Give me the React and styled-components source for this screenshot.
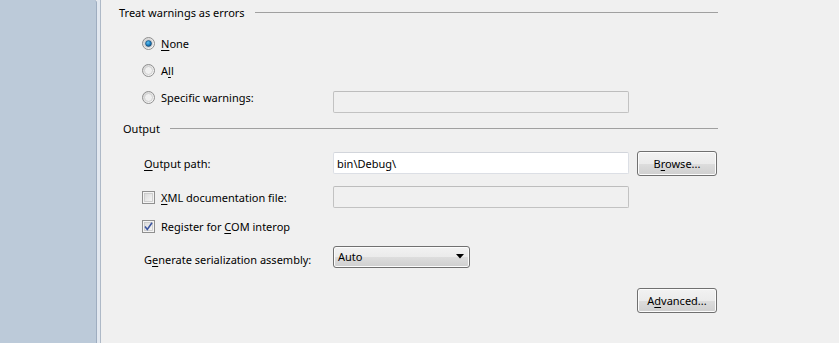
import React from "react";
import styled, { createGlobalStyle } from "styled-components";

const Global = createGlobalStyle`
  html, body { margin: 0; padding: 0; }
  body {
    background: #f0f0f0;
    font-family: "Noto Sans", "Open Sans", sans-serif;
    font-size: 11px;
    color: #000;
  }
`;

const Page = styled.div`
  display: flex;
  width: 839px;
  height: 343px;
  overflow: hidden;
  background: #f0f0f0;
`;

const Sidebar = styled.div`
  width: 96px;
  flex: none;
  background: #bccad9;
  border-top-right-radius: 3px;
  border-right: 1px solid #9eadc0;
`;

const Divider = styled.div`
  width: 3px;
  flex: none;
  background: #e2e8f0;
  border-right: 1px solid #aeb9c7;
`;

const Content = styled.div`
  flex: 1;
  padding-left: 18px;
  display: flex;
  flex-direction: column;
  width: 599px;
  max-width: 599px;
`;

const Header = styled.div`
  display: flex;
  align-items: center;
  height: 24px;
  gap: 10px;
  margin-top: ${(p) => p.$top || 0}px;
  padding-left: ${(p) => p.$indent || 0}px;
  &::after {
    content: "";
    flex: 1;
    border-top: 1px solid #a0a0a0;
  }
`;

const Row = styled.div`
  display: grid;
  grid-template-columns: 183px 296px 80px;
  column-gap: 8px;
  align-items: ${(p) => p.$align || "center"};
  padding-left: 23px;
  height: ${(p) => p.$h || 22}px;
  margin-top: ${(p) => p.$top || 0}px;
`;

const Choice = styled.label`
  display: flex;
  align-items: center;
  gap: 6px;
  white-space: nowrap;
  height: ${(p) => (p.$h ? p.$h + "px" : "auto")};
`;

const Label = styled.span`
  white-space: nowrap;
  padding-left: 2px;
  padding-top: ${(p) => p.$pt || 0}px;
`;

const Key = styled.span`
  text-decoration: underline;
  text-underline-offset: 2px;
`;

const TextBox = styled.div`
  height: 22px;
  box-sizing: border-box;
  border: 1px solid ${(p) => (p.$disabled ? "#c2c2c2" : "#dcdfe5")};
  border-top-color: ${(p) => (p.$disabled ? "#bdbdbd" : "#d2d5db")};
  border-radius: 2px;
  background: ${(p) => (p.$disabled ? "#f0f0f0" : "#ffffff")};
  display: flex;
  align-items: center;
  padding-left: 3px;
  margin-top: ${(p) => p.$mt || 0}px;
`;

const Button = styled.button`
  font: inherit;
  color: #000;
  height: 25px;
  width: 80px;
  box-sizing: border-box;
  border: 1px solid #707070;
  border-radius: 3px;
  background: linear-gradient(#f2f2f2 0%, #ebebeb 50%, #dddddd 51%, #cfcfcf 100%);
  box-shadow: inset 0 0 0 1px #fcfcfc;
  padding: 0;
  grid-column: 3;
`;

const Select = styled.div`
  width: 137px;
  height: 22px;
  box-sizing: border-box;
  border: 1px solid #707070;
  border-radius: 3px;
  background: linear-gradient(#f2f2f2 0%, #ebebeb 50%, #dddddd 51%, #cfcfcf 100%);
  box-shadow: inset 0 0 0 1px #fcfcfc;
  display: flex;
  align-items: center;
  justify-content: space-between;
  padding: 0 5px 1px 4px;
`;

const Actions = styled.div`
  display: flex;
  justify-content: flex-end;
  margin-top: 20px;
  padding-right: 1px;
`;

const Radio = ({ checked }) => (
  <svg width="13" height="13" viewBox="0 0 13 13">
    <defs>
      <linearGradient id="rg" x1="0" y1="0" x2="1" y2="1">
        <stop offset="0" stopColor="#d0d0d0" />
        <stop offset="1" stopColor="#ffffff" />
      </linearGradient>
      <radialGradient id="rb" cx="0.4" cy="0.35" r="0.7">
        <stop offset="0" stopColor="#5fc0f0" />
        <stop offset="0.6" stopColor="#1a7fc0" />
        <stop offset="1" stopColor="#0b4d80" />
      </radialGradient>
    </defs>
    <circle cx="6.5" cy="6.5" r="6" fill="url(#rg)" stroke="#8f8f8f" />
    <circle cx="6.5" cy="6.5" r="4" fill="#f0f0f0" stroke="#c9c9c9" strokeWidth="0.8" />
    {checked && <circle cx="6.5" cy="6.5" r="3" fill="url(#rb)" stroke="#1a3f66" strokeWidth="0.6" />}
  </svg>
);

const Check = ({ checked }) => (
  <svg width="13" height="13" viewBox="0 0 13 13">
    <defs>
      <linearGradient id="cg" x1="0" y1="0" x2="1" y2="1">
        <stop offset="0" stopColor="#dadada" />
        <stop offset="1" stopColor="#f7f7f7" />
      </linearGradient>
    </defs>
    <rect x="0.5" y="0.5" width="12" height="12" fill="#f4f4f4" stroke="#8f8f8f" />
    <rect x="2.5" y="2.5" width="8" height="8" fill="url(#cg)" stroke="#c6c6c6" strokeWidth="0.8" />
    {checked && (
      <path d="M3 6.5 L5.3 9.5 L10 2.8" fill="none" stroke="#3d56a0" strokeWidth="1.6" />
    )}
  </svg>
);

const Arrow = () => (
  <svg width="8" height="5" viewBox="0 0 8 5">
    <path d="M0 0 H8 L4 4.5 Z" fill="#000" />
  </svg>
);

export default function App() {
  return (
    <Page>
      <Global />
      <Sidebar />
      <Divider />
      <Content>
        <Header>Treat warnings as errors</Header>

        <Row $h={27} $top={6}>
          <Choice>
            <Radio checked />
            <span>
              <Key>N</Key>one
            </span>
          </Choice>
        </Row>
        <Row $h={27}>
          <Choice>
            <Radio />
            <span>
              A<Key>l</Key>l
            </span>
          </Choice>
        </Row>
        <Row $h={27} $align="start">
          <Choice $h={27}>
            <Radio />
            <span>
              Specif<Key>i</Key>c warnings:
            </span>
          </Choice>
          <TextBox $disabled $mt={7} />
        </Row>

        <Header $top={5} $indent={4}>Output</Header>

        <Row $h={26} $top={10}>
          <Label>
            <Key>O</Key>utput path:
          </Label>
          <TextBox>bin\Debug\</TextBox>
          <Button>
            B<Key>r</Key>owse...
          </Button>
        </Row>
        <Row $top={10}>
          <Choice>
            <Check />
            <span>
              <Key>X</Key>ML documentation file:
            </span>
          </Choice>
          <TextBox $disabled />
        </Row>
        <Row $top={7}>
          <Choice>
            <Check checked />
            <span>
              Register for <Key>C</Key>OM interop
            </span>
          </Choice>
        </Row>
        <Row $top={9}>
          <Label $pt={5}>
            G<Key>e</Key>nerate serialization assembly:
          </Label>
          <Select>
            <span>Auto</span>
            <Arrow />
          </Select>
        </Row>

        <Actions>
          <Button>
            A<Key>d</Key>vanced...
          </Button>
        </Actions>
      </Content>
    </Page>
  );
}
